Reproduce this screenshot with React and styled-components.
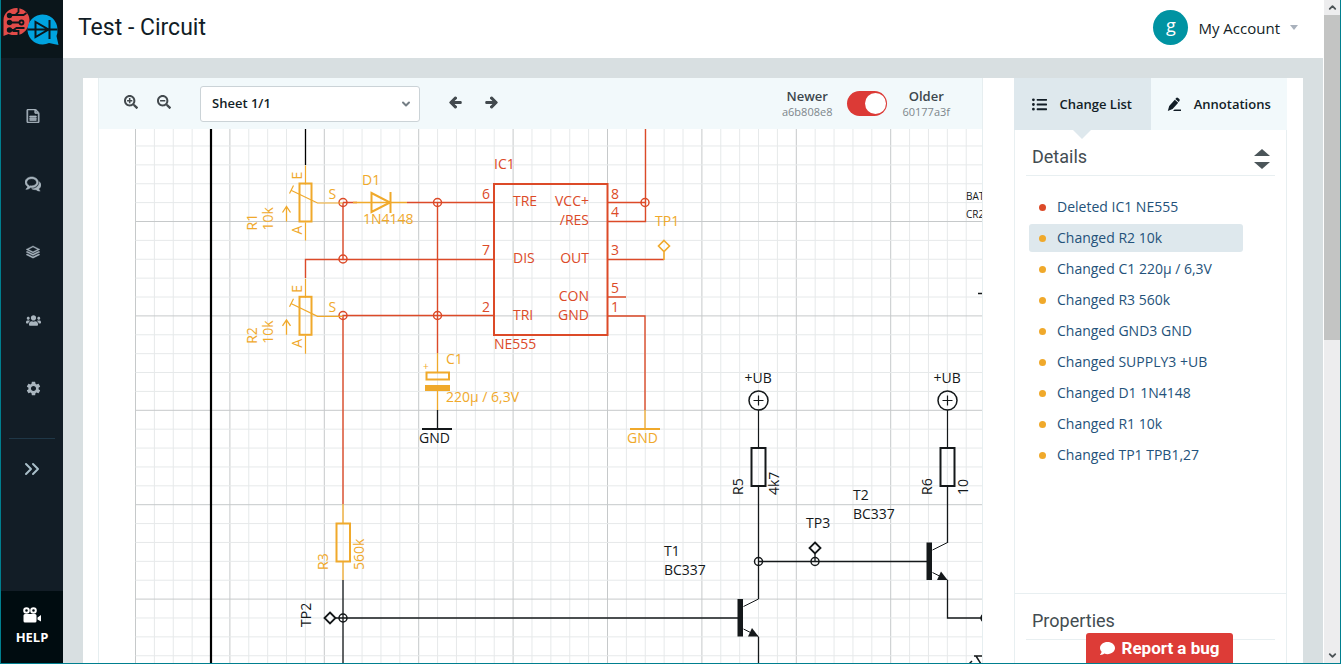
import React, { useState } from "react";
import styled, { createGlobalStyle } from "styled-components";
import { ImFileText2, ImBubbles4, ImStack } from "react-icons/im";
import {
  FaArrowLeft,
  FaArrowRight,
  FaComment,
  FaListUl,
  FaSearchMinus,
  FaSearchPlus,
  FaUsers,
} from "react-icons/fa";
import { FiChevronDown, FiChevronsRight } from "react-icons/fi";
import { MdSettings } from "react-icons/md";

const TEAL = "#007f8f";
const RED = "#dc4a28";
const YELLOW = "#f0a92b";
const BLACK = "#14181a";

const GlobalStyle = createGlobalStyle`
  * {
    box-sizing: border-box;
  }
  body {
    margin: 0;
    overflow: hidden;
    font-family: "Open Sans", "Noto Sans", sans-serif;
    color: #121d26;
  }
  button, select {
    font: inherit;
    color: inherit;
  }
  button {
    border: 0;
    padding: 0;
    background: none;
    cursor: pointer;
  }
`;

const Shell = styled.div`
  display: flex;
  height: 100vh;
  border: 1px solid ${TEAL};
  border-top: 0;
`;

const Sidebar = styled.nav`
  display: flex;
  flex-direction: column;
  flex: none;
  width: 62px;
  background: #121d26;
`;

const LogoLink = styled.a`
  display: block;
  height: 58px;
  background: #0b161b;
`;

const NavList = styled.div`
  display: flex;
  flex-direction: column;
  padding: 24px 8px 0;
`;

const NavLink = styled.a`
  display: flex;
  align-items: center;
  justify-content: center;
  height: 68px;
  padding-left: 2px;
  color: #a9b5be;
`;

const Expand = styled.button`
  display: flex;
  align-items: center;
  justify-content: center;
  height: 60px;
  margin: 16px 8px 0;
  border-top: 1px solid #1f3747;
  color: #a9bfc9;
`;

const Help = styled.button`
  display: flex;
  flex-direction: column;
  align-items: center;
  justify-content: center;
  gap: 5px;
  height: 72px;
  margin-top: auto;
  padding-bottom: 1px;
  background: #000c10;
  color: #fff;
  font-size: 13px;
  font-weight: 700;
  line-height: 18px;
`;

const Main = styled.div`
  display: flex;
  flex-direction: column;
  flex: 1;
  min-width: 0;
`;

const Header = styled.header`
  display: flex;
  align-items: center;
  justify-content: space-between;
  flex: none;
  height: 58px;
  padding: 0 25px 3px 15px;
  background: #fff;
`;

const Title = styled.h1`
  margin: 0;
  font-family: Roboto, sans-serif;
  font-size: 23px;
  font-weight: 400;
`;

const Account = styled.button`
  display: flex;
  align-items: center;
  gap: 10px;
  font-size: 15px;
`;

const Avatar = styled.span`
  width: 35px;
  height: 35px;
  border-radius: 50%;
  background: #0093a2;
  color: #fff;
  font-size: 18px;
  line-height: 30px;
  text-align: center;
`;

const Caret = styled.span`
  border: 5px solid transparent;
  border-width: 5px 4px 0;
  border-top-color: #a9b1bc;
`;

const Content = styled.main`
  display: flex;
  flex: 1;
  min-height: 0;
  padding: 20px 20px 0;
  background: #d8dfe1;
`;

const Panel = styled.div`
  display: flex;
  flex: 1;
  gap: 31px;
  min-width: 0;
  padding: 0 16px 0 15px;
  background: #fff;
`;

const Viewer = styled.section`
  display: flex;
  flex-direction: column;
  flex: 1;
  min-width: 0;
  border: 1px solid #e6eef0;
  border-width: 0 1px;
`;

const Toolbar = styled.div`
  display: flex;
  align-items: center;
  flex: none;
  height: 51px;
  padding: 0 32px 0 25px;
  background: #f2f9fb;
`;

const IconButton = styled.button`
  display: flex;
  width: 16px;
  margin-right: ${(p) => p.$gap}px;
  padding-bottom: 3px;
  color: #434a4e;
`;

const SheetSelect = styled.label`
  display: grid;
  grid-template: 36px / 220px;
  align-items: center;
  margin-right: 29px;

  select,
  svg {
    grid-area: 1 / 1;
  }
  select {
    height: 36px;
    padding: 0 11px 2px;
    appearance: none;
    border: 1px solid #cbd3d7;
    border-radius: 3px;
    background: #fff;
    color: #121d26;
    font-size: 13px;
    font-weight: 600;
  }
  svg {
    justify-self: end;
    margin-right: 8px;
    color: #747e85;
    pointer-events: none;
  }
`;

const Versions = styled.div`
  display: flex;
  align-items: center;
  gap: 15px;
  margin-left: auto;
`;

const Version = styled.div`
  color: #7d868b;
  font-size: 11px;
  line-height: 16px;
  text-align: center;

  strong {
    display: block;
    color: #3c474d;
    font-size: 13px;
    font-weight: 600;
  }
`;

const Toggle = styled.input`
  display: flex;
  justify-content: flex-end;
  width: 40px;
  height: 25px;
  margin: 0;
  padding: 2px 1px;
  appearance: none;
  border-radius: 13px;
  background: #dc3a36;

  &:not(:checked) {
    justify-content: flex-start;
  }
  &::before {
    content: "";
    width: 21px;
    height: 21px;
    border-radius: 50%;
    background: #fff;
  }
`;

const Canvas = styled.div`
  flex: 1;
  min-height: 0;
  overflow: hidden;

  svg {
    display: block;
  }
`;

const Aside = styled.aside`
  display: flex;
  flex-direction: column;
  flex: none;
  width: 273px;
`;

const Tabs = styled.div`
  display: grid;
  grid-template-columns: 1fr 1fr;
  flex: none;
  height: 52px;
`;

const Tab = styled.button`
  position: relative;
  display: flex;
  align-items: center;
  justify-content: center;
  gap: 12px;
  background: ${(p) => (p.$active ? "#dee8ed" : "#f2f9fb")};
  font-size: 13px;
  font-weight: 600;

  &::after {
    content: "";
    display: ${(p) => (p.$active ? "block" : "none")};
    position: absolute;
    top: 100%;
    left: 50%;
    margin-left: -9px;
    border: 9px solid transparent;
    border-top-color: #dee8ed;
    border-bottom: 0;
  }
`;

const Section = styled.section`
  flex: ${(p) => (p.$grow ? 1 : "none")};
  height: ${(p) => (p.$grow ? "auto" : "70px")};
  padding: 9px 11px 0;
  border: 1px solid #e8eff1;
  border-width: 0 1px;
  border-top-width: ${(p) => (p.$grow ? 0 : 1)}px;
`;

const SectionHeader = styled.div`
  display: flex;
  align-items: center;
  justify-content: space-between;
  height: 37px;
  padding: 0 5px 0 6px;
  border-bottom: 1px solid #e8eff1;

  h2 {
    margin: 0;
    padding-bottom: 1px;
    color: #434c51;
    font-family: Roboto, sans-serif;
    font-size: 18px;
    font-weight: 400;
  }
`;

const SortButton = styled.button`
  display: flex;
  flex-direction: column;
  gap: 6px;
  margin-top: 4px;

  &::before,
  &::after {
    content: "";
    border: 8px solid transparent;
  }
  &::before {
    border-top: 0;
    border-bottom: 7px solid #4b5559;
  }
  &::after {
    border-bottom: 0;
    border-top: 7px solid #4b5559;
  }
`;

const Changes = styled.ul`
  display: flex;
  flex-direction: column;
  gap: 3px;
  margin: 17px 32px 0 3px;
  padding: 0;
  list-style: none;
`;

const Change = styled.a`
  display: flex;
  align-items: center;
  gap: 11px;
  height: 28px;
  padding: 0 0 2px 10px;
  border-radius: 3px;
  background: ${(p) => (p.$selected ? "#dee8ed" : "transparent")};
  color: #24527a;
  font-size: 14px;
  text-decoration: none;

  &::before {
    content: "";
    width: 7px;
    height: 7px;
    margin-top: 2px;
    border-radius: 50%;
    background: ${(p) => (p.$deleted ? RED : YELLOW)};
  }
`;

const ReportButton = styled.button`
  position: fixed;
  right: 108px;
  bottom: 1px;
  display: flex;
  align-items: center;
  justify-content: center;
  gap: 7px;
  width: 147px;
  height: 30px;
  border-radius: 3px 3px 0 0;
  background: #dd3c37;
  color: #fff;
  font-family: Roboto, sans-serif;
  font-size: 17px;
  font-weight: 700;
`;

const Scrollbar = styled.div`
  display: flex;
  flex-direction: column;
  flex: none;
  width: 17px;
  border-left: 1px solid #fff;
  background: #ededee;
  color: #4c5356;
`;

const ScrollArrow = styled.button`
  display: flex;
  align-items: center;
  justify-content: center;
  height: 15px;
  margin-top: ${(p) => (p.$down ? "auto" : 0)};
`;

const ScrollThumb = styled.div`
  height: 49%;
  background: #c3c4c3;
`;

const changes = [
  { id: 1, text: "Deleted IC1 NE555", deleted: true },
  { id: 2, text: "Changed R2 10k" },
  { id: 3, text: "Changed C1 220µ / 6,3V" },
  { id: 4, text: "Changed R3 560k" },
  { id: 5, text: "Changed GND3 GND" },
  { id: 6, text: "Changed SUPPLY3 +UB" },
  { id: 7, text: "Changed D1 1N4148" },
  { id: 8, text: "Changed R1 10k" },
  { id: 9, text: "Changed TP1 TPB1,27" },
];

function Logo() {
  return (
    <svg width="62" height="58" viewBox="1.500 0 62 58" aria-hidden="true">
      <path
        d="M4 36V20C4 13 10 8 17 8s13 5 13 12-5 15-13 15c-4 0-6 0-8-1z"
        fill="#e24b49"
      />
      <g stroke="#0b161b" strokeWidth="1.8" fill="none">
        <path d="M19 8v4l-3 3h-5M9 22.500h11M10 30h4l3-2h8M15 15h9l3-2M19 36v-5h-6" />
        <circle cx="10" cy="15.500" r="1.800" fill="#0b161b" />
        <circle cx="10" cy="22.500" r="1.800" fill="#0b161b" />
        <circle cx="10" cy="30" r="1.800" fill="#0b161b" />
        <circle cx="22" cy="22.500" r="2" />
      </g>
      <path
        d="M58 29.500a15 15 0 1 0-8.500 13.500l9.500 2-2-9a15 15 0 0 0 1-6.500z"
        fill="#00a3df"
      />
      <g stroke="#0b161b" strokeWidth="2" fill="none">
        <path d="M28 29.500h30M36 22v15l13-7.500zM50 20v19" />
      </g>
    </svg>
  );
}

function CameraIcon() {
  return (
    <svg width="18" height="16" viewBox="0 0 18 16" aria-hidden="true">
      <g fill="none" stroke="currentColor" strokeWidth="2">
        <circle cx="3.500" cy="3.500" r="2.300" />
        <circle cx="10.500" cy="3.500" r="2.300" />
      </g>
      <path
        d="M2 7h10a1.500 1.500 0 0 1 1.500 1.500V14a1.500 1.500 0 0 1-1.500 1.500H2A1.500 1.500 0 0 1 .5 14V8.500A1.500 1.500 0 0 1 2 7zM14.500 10.500 18 8v6.500l-3.500-2z"
        fill="currentColor"
      />
    </svg>
  );
}

function PenIcon() {
  return (
    <svg width="15" height="15" viewBox="0 0 15 15" fill="currentColor">
      <path d="M9 1.200a1.500 1.500 0 0 1 2.100-.2l1.200 1a1.500 1.500 0 0 1 .1 2.100l-.7.8L8.300 2zM7.800 2.700 11.200 5.700l-5.600 6.300L.8 14l1.400-5zM7.500 12.400H14V14H6z" />
    </svg>
  );
}

const Label = ({ x, y, children, color = BLACK, size = 14, end, up }) => (
  <text
    x={x}
    y={y}
    fill={color}
    fontSize={size}
    textAnchor={end ? "end" : "start"}
    transform={up ? `rotate(-90 ${x} ${y})` : undefined}
  >
    {children}
  </text>
);

const STEP = 18.88;

function Grid() {
  const line = (i) => (i % 5 === 0 ? "#c6c9ca" : "#e6e9ea");
  return (
    <g>
      {Array.from({ length: 45 }, (_, i) => (
        <path key={i} d={`M${135.5 + i * STEP} 129V1200`} stroke={line(i)} />
      ))}
      {Array.from({ length: 57 }, (_, i) => (
        <path
          key={i}
          d={`M135.500 ${127.1 + i * STEP}H983`}
          stroke={line(i)}
        />
      ))}
    </g>
  );
}

// Trimmer potentiometer, origin at the top of its body
function Trimmer({ y, name }) {
  return (
    <g transform={`translate(305.500 ${y})`}>
      <g stroke={YELLOW} fill="none">
        <path d="M0-18V1M0 39V57M37 19.500H12L-14 7M-16 10l4-8" strokeWidth="1.200" />
        <path d="M-19 38V24M-23 29l4-6 4 6" strokeWidth="1.300" />
        <rect x="-6" y="0" width="12" height="38" strokeWidth="2" />
      </g>
      <Label x={-4} y={-4} color={YELLOW} up>E</Label>
      <Label x={-4} y={51} color={YELLOW} up>A</Label>
      <Label x={23} y={15} color={YELLOW}>S</Label>
      <Label x={-49} y={47} color={YELLOW} up>{name}</Label>
      <Label x={-33} y={47} color={YELLOW} up>10k</Label>
    </g>
  );
}

function Transistor({ x, y }) {
  return (
    <g transform={`translate(${x} ${y})`} stroke={BLACK}>
      <path d="M-15 7.500 0 0M-15 30 0 37.500" />
      <rect x="-21" y="0" width="5.500" height="37.500" fill={BLACK} stroke="none" />
      <path d="M0 37.500-6.500 29-10.500 37.500z" fill={BLACK} stroke="none" />
    </g>
  );
}

function Supply({ x }) {
  return (
    <g>
      <g stroke={BLACK} fill="none">
        <circle cx={x} cy="400.500" r="9.500" strokeWidth="1.500" />
        <path d={`M${x - 5} 400.500h10M${x} 395.500v10M${x} 410v38`} strokeWidth="1.200" />
        <rect x={x - 7} y="448" width="14" height="38" strokeWidth="2" />
      </g>
      <Label x={x - 14} y={383}>+UB</Label>
    </g>
  );
}

function Schematic() {
  return (
    <svg width="1400" height="1100" role="img" aria-label="Circuit schematic">
      <g transform="translate(-99 -129)">
        <Grid />
        <path d="M211 129V1200" stroke="#000" strokeWidth="2.200" />
        <path d="M305.500 129V165" stroke="#000" strokeWidth="1.300" />

        <g stroke={RED} fill="none">
          <path d="M343 202.500V259M343 202.500H357M407 202.500H494M305.500 278V259.500H494M343 504V315.500H494" strokeWidth="1.400" />
          <path d="M437.500 202.500V353M607.500 202.500H645M645.500 129V221.500H607.500M607.500 259.500H664M607.500 297H626M607.500 316H645V410" strokeWidth="1.400" />
          <rect x="494" y="184" width="113.500" height="151" strokeWidth="2" />
          <g strokeWidth="1.500">
            <circle cx="343" cy="202.500" r="4" />
            <circle cx="343" cy="259" r="4" />
            <circle cx="343" cy="315.500" r="4" />
            <circle cx="437.500" cy="202.500" r="4" />
            <circle cx="437.500" cy="315.500" r="4" />
            <circle cx="645" cy="202.500" r="4" />
          </g>
        </g>
        <Label x={494} y={169} color={RED}>IC1</Label>
        <Label x={494} y={349} color={RED}>NE555</Label>
        <Label x={490} y={199} color={RED} end>6</Label>
        <Label x={490} y={255} color={RED} end>7</Label>
        <Label x={490} y={312} color={RED} end>2</Label>
        <Label x={513} y={206} color={RED}>TRE</Label>
        <Label x={513} y={263} color={RED}>DIS</Label>
        <Label x={513} y={320} color={RED}>TRI</Label>
        <Label x={589} y={206} color={RED} end>VCC+</Label>
        <Label x={589} y={225} color={RED} end>/RES</Label>
        <Label x={589} y={263} color={RED} end>OUT</Label>
        <Label x={589} y={301} color={RED} end>CON</Label>
        <Label x={589} y={320} color={RED} end>GND</Label>
        <Label x={611} y={199} color={RED}>8</Label>
        <Label x={611} y={217} color={RED}>4</Label>
        <Label x={611} y={255} color={RED}>3</Label>
        <Label x={611} y={293} color={RED}>5</Label>
        <Label x={611} y={312} color={RED}>1</Label>

        <Trimmer y={183.5} name="R1" />
        <Trimmer y={296.800} name="R2" />
        <g stroke={YELLOW} fill="none">
          <path d="M353 202.500H407M437.500 353V372M437.500 391V410M343 504V523M343 562V580M645 410V429" strokeWidth="1.300" />
          <g strokeWidth="2">
            <path d="M371.500 193V212L390 202.500zM390.500 192V213M630 429H660" />
            <path d="M664 240.500 669.500 246 664 251.500 658.500 246zM664 252V260" strokeWidth="1.600" />
            <rect x="426.500" y="372.500" width="22.500" height="7" />
            <rect x="336.500" y="523.500" width="13.500" height="38" />
          </g>
        </g>
        <rect x="425" y="385" width="25" height="6" fill={YELLOW} />
        <Label x={362} y={185} color={YELLOW}>D1</Label>
        <Label x={363} y={224} color={YELLOW}>1N4148</Label>
        <Label x={655} y={226} color={YELLOW}>TP1</Label>
        <Label x={446} y={364} color={YELLOW}>C1</Label>
        <Label x={423} y={370} color={YELLOW} size={10}>+</Label>
        <Label x={446} y={402} color={YELLOW}>220µ / 6,3V</Label>
        <Label x={627} y={443} color={YELLOW}>GND</Label>
        <Label x={328} y={570} color={YELLOW} up>R3</Label>
        <Label x={364} y={570} color={YELLOW} up>560k</Label>

        <g stroke={BLACK} fill="none">
          <path d="M437.500 410V429M343 580V1200M336 618H738M758.500 486V599M758.500 637V1200M947.500 486V543M947.500 580V618H983M758.500 561.500H927M815 554V561M978 293.500H983" strokeWidth="1.300" />
          <path d="M422 429H452" strokeWidth="2" />
          <g strokeWidth="1.500">
            <circle cx="343" cy="618" r="4" />
            <circle cx="758.500" cy="561.500" r="4" />
            <circle cx="815" cy="561.500" r="4" />
            <circle cx="985" cy="618" r="4" fill={BLACK} />
            <path d="M330 612.500 335.500 618 330 623.500 324.500 618zM815 542.500 820.500 548 815 553.500 809.500 548z" strokeWidth="1.800" />
            <path d="M974 656H983M976 656 981 664M969 664 972 661" />
          </g>
        </g>
        <Supply x={758.500} />
        <Supply x={947.500} />
        <Transistor x={758.500} y={599} />
        <Transistor x={947.500} y={542.500} />
        <Label x={419} y={443}>GND</Label>
        <Label x={311} y={627} up>TP2</Label>
        <Label x={743} y={495} up>R5</Label>
        <Label x={779} y={495} up>4k7</Label>
        <Label x={932} y={495} up>R6</Label>
        <Label x={968} y={495} up>10</Label>
        <Label x={664} y={556}>T1</Label>
        <Label x={664} y={575}>BC337</Label>
        <Label x={853} y={500}>T2</Label>
        <Label x={853} y={519}>BC337</Label>
        <Label x={806} y={528}>TP3</Label>
        <Label x={966} y={200} size={10}>BAT</Label>
        <Label x={966} y={218} size={10}>CR2</Label>
      </g>
    </svg>
  );
}

export default function App() {
  const [older, setOlder] = useState(true);
  const [selected, setSelected] = useState(2);

  return (
    <>
      <GlobalStyle />
      <Shell>
        <Sidebar>
          <LogoLink href="#" aria-label="Home">
            <Logo />
          </LogoLink>
          <NavList>
            <NavLink href="#" aria-label="Documents">
              <ImFileText2 size={14} stroke="currentColor" strokeWidth={0.8} />
            </NavLink>
            <NavLink href="#" aria-label="Discussions">
              <ImBubbles4 size={16} stroke="currentColor" strokeWidth={0.6} />
            </NavLink>
            <NavLink href="#" aria-label="Layers">
              <ImStack size={14} stroke="currentColor" strokeWidth={0.4} />
            </NavLink>
            <NavLink href="#" aria-label="Team"><FaUsers size={15} /></NavLink>
            <NavLink href="#" aria-label="Settings"><MdSettings size={17} /></NavLink>
          </NavList>
          <Expand aria-label="Expand menu">
            <FiChevronsRight size={24} />
          </Expand>
          <Help>
            <CameraIcon />
            HELP
          </Help>
        </Sidebar>

        <Main>
          <Header>
            <Title>Test - Circuit</Title>
            <Account>
              <Avatar>g</Avatar>
              My Account
              <Caret />
            </Account>
          </Header>
          <Content>
            <Panel>
              <Viewer>
                <Toolbar>
                  <IconButton $gap={17} aria-label="Zoom in"><FaSearchPlus size={14} /></IconButton>
                  <IconButton $gap={27} aria-label="Zoom out"><FaSearchMinus size={14} /></IconButton>
                  <SheetSelect>
                    <select aria-label="Sheet">
                      <option>Sheet 1/1</option>
                    </select>
                    <FiChevronDown size={12} strokeWidth={4} />
                  </SheetSelect>
                  <IconButton $gap={20} aria-label="Previous sheet">
                    <FaArrowLeft size={13} stroke="currentColor" strokeWidth={40} />
                  </IconButton>
                  <IconButton $gap={0} aria-label="Next sheet">
                    <FaArrowRight size={13} stroke="currentColor" strokeWidth={40} />
                  </IconButton>
                  <Versions>
                    <Version>
                      <strong>Newer</strong>
                      a6b808e8
                    </Version>
                    <Toggle
                      type="checkbox"
                      aria-label="Show older version"
                      checked={older}
                      onChange={(e) => setOlder(e.target.checked)}
                    />
                    <Version>
                      <strong>Older</strong>
                      60177a3f
                    </Version>
                  </Versions>
                </Toolbar>
                <Canvas>
                  <Schematic />
                </Canvas>
              </Viewer>

              <Aside>
                <Tabs>
                  <Tab $active><FaListUl size={15} />Change List</Tab>
                  <Tab><PenIcon />Annotations</Tab>
                </Tabs>
                <Section $grow>
                  <SectionHeader>
                    <h2>Details</h2>
                    <SortButton aria-label="Sort" />
                  </SectionHeader>
                  <Changes>
                    {changes.map((item) => (
                      <li key={item.id}>
                        <Change
                          href="#"
                          $deleted={item.deleted}
                          $selected={item.id === selected}
                          onClick={() => setSelected(item.id)}
                        >
                          {item.text}
                        </Change>
                      </li>
                    ))}
                  </Changes>
                </Section>
                <Section>
                  <SectionHeader>
                    <h2>Properties</h2>
                  </SectionHeader>
                </Section>
              </Aside>
            </Panel>
          </Content>
        </Main>

        <Scrollbar>
          <ScrollArrow aria-label="Scroll up">
            <FiChevronDown size={11} strokeWidth={4} transform="rotate(180)" />
          </ScrollArrow>
          <ScrollThumb />
          <ScrollArrow $down aria-label="Scroll down">
            <FiChevronDown size={11} strokeWidth={4} />
          </ScrollArrow>
        </Scrollbar>
        <ReportButton>
          <FaComment size={15} />
          Report a bug
        </ReportButton>
      </Shell>
    </>
  );
}
